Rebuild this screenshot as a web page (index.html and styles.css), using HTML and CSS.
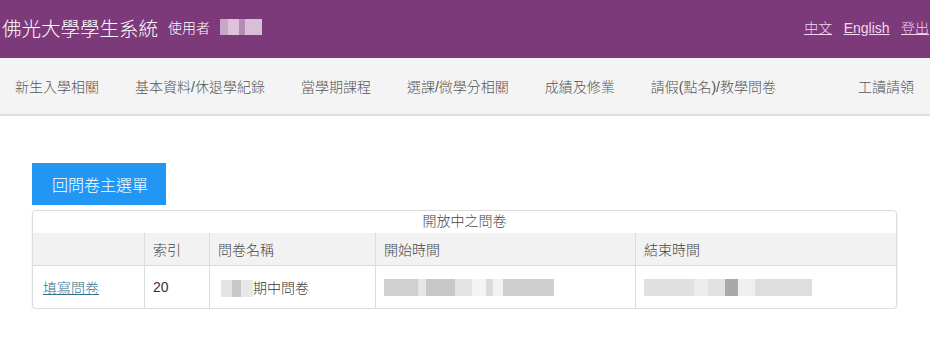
FILE: index.html
```html
<!DOCTYPE html>
<html lang="zh-Hant">
<head>
  <meta charset="UTF-8">
  <title>佛光大學學生系統</title>
  <link rel="stylesheet" href="styles.css">
</head>
<body>
  <header class="topbar">
    <div class="brand">
      <span class="site-name">佛光大學學生系統</span>
      <span class="user-label">使用者</span>
      <span class="user-name"></span>
    </div>
    <div class="lang-links">
      <a href="#">中文</a>
      <a href="#">English</a>
      <a href="#">登出</a>
    </div>
  </header>

  <nav class="menu">
    <a href="#">新生入學相關</a>
    <a href="#">基本資料/休退學紀錄</a>
    <a href="#">當學期課程</a>
    <a href="#">選課/微學分相關</a>
    <a href="#">成績及修業</a>
    <a href="#">請假(點名)/教學問卷</a>
    <a href="#" class="menu-right">工讀請領</a>
  </nav>

  <main class="content">
    <button class="back-button">回問卷主選單</button>

    <div class="survey-panel">
      <div class="panel-title">開放中之問卷</div>
      <table class="survey-table">
        <thead>
          <tr>
            <th class="col-action"></th>
            <th class="col-index">索引</th>
            <th class="col-name">問卷名稱</th>
            <th class="col-start">開始時間</th>
            <th>結束時間</th>
          </tr>
        </thead>
        <tbody>
          <tr>
            <td><a href="#" class="fill-link">填寫問卷</a></td>
            <td>20</td>
            <td><span class="blur blur-term"></span>期中問卷</td>
            <td><span class="blur blur-date"></span></td>
            <td><span class="blur blur-date light"></span></td>
          </tr>
        </tbody>
      </table>
    </div>
  </main>
</body>
</html>
```

FILE: styles.css
```css
/* page base */
body {
  margin: 0;
  font-family: "Liberation Sans", "Noto Sans CJK TC", sans-serif;
  font-weight: 300;
  color: #333;
  background: #fff;
}

/* purple top bar */
.topbar {
  display: flex;
  justify-content: space-between;
  align-items: center;
  height: 58px;
  padding: 0 1px 4px 2px;
  box-sizing: border-box;
  background-color: #7c3a7a;
  color: #fff;
}

.brand {
  display: flex;
  align-items: center;
}

.site-name {
  font-size: 19.5px;
}

.user-label {
  font-size: 14px;
  margin-left: 10px;
}

.user-name {
  display: inline-block;
  width: 42px;
  height: 16px;
  margin-left: 10px;
  background: linear-gradient(90deg, #c9a6c8 0 20%, #dcc3da 20% 45%, #b68cb4 45% 60%, #d8bfd6 60% 100%);
}

.lang-links a {
  color: #f6d6f3;
  font-size: 14px;
  margin-left: 7px;
}

/* main menu */
.menu {
  display: flex;
  align-items: center;
  height: 56px;
  padding: 0 16px 0 15px;
  gap: 36px;
  background-color: #f4f4f4;
  border-bottom: 2px solid #dedede;
}

.menu a {
  color: #555;
  font-size: 14px;
  text-decoration: none;
}

.menu a.menu-right {
  margin-left: auto;
}

/* content */
.content {
  padding: 47px 33px 0 32px;
}

.back-button {
  display: block;
  height: 42px;
  padding: 0 18px 0 20px;
  border: none;
  background-color: #2196f3;
  color: #fff;
  font-family: inherit;
  font-weight: 300;
  font-size: 16px;
  cursor: pointer;
}

.survey-panel {
  margin-top: 5px;
  border: 1px solid #dcdcdc;
  border-radius: 4px;
  box-shadow: 0 1px 2px rgba(0, 0, 0, 0.12);
  overflow: hidden;
}

.panel-title {
  height: 22px;
  line-height: 21px;
  text-align: center;
  font-size: 14px;
  color: #444;
}

.survey-table {
  width: 100%;
  border-collapse: collapse;
  font-size: 14px;
}

.survey-table th {
  height: 32px;
  padding: 0 8px;
  text-align: left;
  font-weight: 300;
  color: #444;
  background-color: #f2f2f2;
  border-left: 1px solid #dcdcdc;
  border-bottom: 1px solid #dcdcdc;
}

.survey-table td {
  height: 42px;
  padding: 0 8px;
  color: #333;
  border-left: 1px solid #dcdcdc;
}

.survey-table th:first-child,
.survey-table td:first-child {
  border-left: none;
  padding-left: 10px;
}

.col-action { width: 93px; }
.col-index { width: 48px; }
.col-name { width: 149px; }
.col-start { width: 243px; }

.fill-link {
  color: #2f6f8f;
}

/* blurred personal data */
.blur {
  display: inline-block;
  height: 17px;
  vertical-align: middle;
}

.blur-term {
  width: 35px;
  background: linear-gradient(90deg, #fff 0 10%, #e4e4e4 10% 40%, #c8c8c8 40% 65%, #e8e8e8 65% 100%);
}

.blur-date {
  width: 170px;
  background: linear-gradient(90deg, #d0d0d0 0 20%, #e6e6e6 20% 25%, #c8c8c8 25% 42%, #e4e4e4 42% 52%, #f4f4f4 52% 60%, #dadada 60% 64%, #f2f2f2 64% 70%, #cfcfcf 70% 100%);
}

.blur-date.light {
  width: 168px;
  background: linear-gradient(90deg, #e0e0e0 0 30%, #ececec 30% 38%, #e2e2e2 38% 48%, #a9a9a9 48% 56%, #efefef 56% 66%, #dedede 66% 100%);
}
```
